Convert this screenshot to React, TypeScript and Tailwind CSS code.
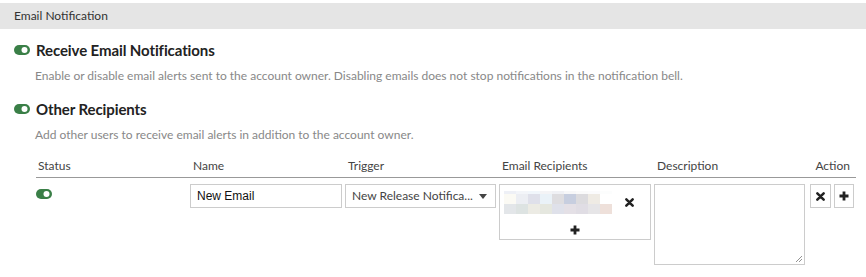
import React from 'react';

const Toggle: React.FC = () => (
  <svg width={16} height={10} viewBox="0 0 16 10" className="shrink-0">
    <rect x="0" y="0" width="16" height="10" rx="5" fill="#3a7f47" />
    <circle cx="10.5" cy="5" r="3" fill="#ffffff" />
  </svg>
);

const XIcon: React.FC = () => (
  <svg width="9" height="9" viewBox="0 0 10 10">
    <path d="M1.5 1.5 L8.5 8.5 M8.5 1.5 L1.5 8.5" stroke="#222" strokeWidth="2.8" strokeLinecap="round" />
  </svg>
);

const PlusIcon: React.FC = () => (
  <svg width="10" height="10" viewBox="0 0 10 10">
    <path d="M5 0.5 V9.5 M0.5 5 H9.5" stroke="#222" strokeWidth="2.8" />
  </svg>
);

// blurred address chips, pixelated in the screenshot
const blur = [
  ['#eef0f6', '#f3f5f9', '#f1f6fb', '#f4f4f6', '#f0f1f5', '#f7f7f8', '#fafafa', '#fbfbfc', '#fcfdfd'],
  ['#fbfaf4', '#eceef3', '#dfe0ea', '#eaf2f8', '#dedde0', '#c7cedf', '#dcdbde', '#efebe4', '#ffffff'],
  ['#e3e6e9', '#dde3e2', '#ecebe4', '#e5e7df', '#dfe1ea', '#e4e0e6', '#e0dde4', '#e6e5e7', '#eee0da'],
];

export default function App() {
  const cols = 'grid grid-cols-[151px_152px_151px_152px_151px_48px] gap-x-[3px]';

  return (
    <div className="w-[866px] h-[277px] bg-white text-[#333] font-['Lato',sans-serif]">
      <div className="pt-[3px]">
        <div className="h-[26px] bg-[#e5e5e5] flex items-center px-[14px] text-[12px] text-[#333]">
          Email Notification
        </div>
      </div>

      <section className="pl-[14px] pt-[10px]">
        <div className="flex items-center gap-[6px]">
          <Toggle />
          <h2 className="text-[15px] font-bold text-[#222] leading-[22px] tracking-[-0.1px]">Receive Email Notifications</h2>
        </div>
        <p className="pl-[21px] pt-[7px] text-[12px] text-[#888] leading-[16px]">
          Enable or disable email alerts sent to the account owner. Disabling emails does not stop notifications in the notification bell.
        </p>

        <div className="flex items-center gap-[6px] pt-[14px]">
          <Toggle />
          <h2 className="text-[15px] font-bold text-[#222] leading-[22px] tracking-[-0.1px]">Other Recipients</h2>
        </div>
        <p className="pl-[21px] pt-[7px] text-[12px] text-[#888] leading-[16px]">
          Add other users to receive email alerts in addition to the account owner.
        </p>
      </section>

      <div className="ml-[36px] mr-[10px] mt-[15px] text-[12px]">
        <div className={`${cols} border-b border-[#999] pb-[3px] text-[#444] leading-[16px]`}>
          <div className="pl-[2px]">Status</div>
          <div className="pl-[3px]">Name</div>
          <div className="pl-[3px]">Trigger</div>
          <div className="pl-[3px]">Email Recipients</div>
          <div className="pl-[3px]">Description</div>
          <div className="text-right pr-[6px]">Action</div>
        </div>

        <div className={`${cols} pt-[6px] items-start`}>
          <div className="pt-[5px]">
            <Toggle />
          </div>
          <div className="h-[24px] border border-[#ccc] flex items-center px-[6px] font-['Liberation_Sans',Arial,sans-serif] text-[12px] text-[#111]">
            New Email
          </div>
          <div className="h-[24px] border border-[#ccc] flex items-center justify-between pl-[6px] pr-[8px] text-[12px] text-[#444] whitespace-nowrap">
            <span>New Release Notifica...</span>
            <svg width="8" height="5" viewBox="0 0 8 5">
              <path d="M0 0 H8 L4 5 Z" fill="#444" />
            </svg>
          </div>
          <div className="h-[56px] border border-[#ccc] flex flex-col">
            <div className="flex items-center justify-between pl-[4px] pr-[16px] pt-[6px]">
              <div className="flex flex-col">
                {blur.map((row, i) => (
                  <div key={i} className={`flex ${i === 0 ? 'h-[3px]' : 'h-[10px]'}`}>
                    {row.map((c, j) => (
                      <div key={j} className="w-[12px]" style={{ backgroundColor: c }} />
                    ))}
                  </div>
                ))}
              </div>
              <XIcon />
            </div>
            <div className="flex justify-center pt-[11px]">
              <PlusIcon />
            </div>
          </div>
          <div className="h-[81px] border border-[#ccc] relative">
            <svg width="7" height="7" viewBox="0 0 7 7" className="absolute right-[2px] bottom-[2px]">
              <path d="M1 7 L7 1 M4 7 L7 4" stroke="#777" strokeWidth="0.8" />
            </svg>
          </div>
          <div className="flex justify-end gap-[3px] pr-[2px]">
            <div className="w-[21px] h-[24px] border border-[#ccc] flex items-center justify-center">
              <XIcon />
            </div>
            <div className="w-[20px] h-[24px] border border-[#ccc] flex items-center justify-center">
              <PlusIcon />
            </div>
          </div>
        </div>
      </div>
    </div>
  );
}
